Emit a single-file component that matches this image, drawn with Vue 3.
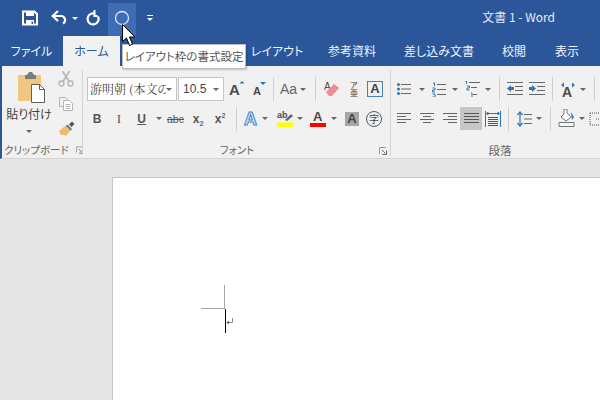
<template>
  <div class="word">
    <header class="titlebar">
      <div class="qat">
        <svg class="q-save" width="16" height="16" viewBox="0 0 16 16"><path d="M1 1.5h11.5l2.5 2.5v10.5H1z" fill="none" stroke="#fff" stroke-width="2"/><path d="M4 1h8v5H4zM4 10h8v5H4z" fill="#fff"/><path d="M9.5 11.5h1.5v2.5H9.500z" fill="#2b579a"/></svg>
        <svg class="q-undo" width="16" height="16" viewBox="0 0 16 16"><path d="M2.500 6h7.500a4 4 0 0 1 2 7.500" fill="none" stroke="#fff" stroke-width="2.200"/><path d="M7 1L1.500 6 7 11" fill="none" stroke="#fff" stroke-width="2.200"/></svg>
        <i class="dd dd-white q-dd"></i>
        <svg class="q-redo" width="16" height="16" viewBox="0 0 16 16"><path d="M10 3.500a5.500 5.500 0 1 0 4 3" fill="none" stroke="#fff" stroke-width="2.200"/><path d="M9.500 0v7h4V5h-2V0z" fill="#fff"/></svg>
        <div class="q-shape">
          <svg width="16" height="16" viewBox="0 0 16 16"><circle cx="8" cy="8" r="6.500" fill="none" stroke="#dfe7f4" stroke-width="1.300"/></svg>
        </div>
        <svg class="q-more" width="8" height="8" viewBox="0 0 8 8"><path d="M1 1h6v1H1z" fill="#fff"/><path d="M1 4h6L4 7z" fill="#fff"/></svg>
      </div>
      <div class="doc-title">文書 1 - Word</div>
    </header>

    <nav class="tabs">
      <div v-for="tab in tabs" :key="tab" class="tab" :class="{ active: tab === 'ホーム' }">{{ tab }}</div>
    </nav>

    <section class="ribbon">
      <div class="group g-clip">
        <div class="clip-body">
          <div class="paste">
            <svg width="28" height="32" viewBox="0 0 28 32">
              <path d="M1 4h23v26H1z" fill="#f0c780"/>
              <path d="M8 4h2l2-3h3l2 3h2v4H8z" fill="#7b7b7b"/>
              <path d="M14.500 13.500h8l5 5v13h-13z" fill="#fff" stroke="#5f5f5f"/>
              <path d="M22.500 13.500v5h5" fill="none" stroke="#5f5f5f"/>
            </svg>
            <span class="paste-label">貼り付け</span>
            <i class="dd paste-dd"></i>
          </div>
          <div class="clip-tools">
            <svg width="16" height="16" viewBox="0 0 16 16"><circle cx="3.500" cy="12.500" r="2.500" fill="none" stroke="#b4b4b4" stroke-width="1.300"/><circle cx="12.500" cy="12.500" r="2.500" fill="none" stroke="#b4b4b4" stroke-width="1.300"/><path d="M5 10.500L11.500 0M11 10.500L4.500 0" stroke="#b4b4b4" stroke-width="1.500" fill="none"/></svg>
            <svg width="16" height="16" viewBox="0 0 16 16"><path d="M1.500 1.500h6l2 2v2M5 10.500H1.500v-9" fill="#f2f2f2" stroke="#b4b4b4"/><path d="M5.500 4.500h6l3 3v7h-9z" fill="#fff" stroke="#b4b4b4"/><path d="M7.500 8.500h5M7.500 10.500h5M7.500 12.500h5" stroke="#b4b4b4"/></svg>
            <svg width="17" height="16" viewBox="0 0 17 16"><path d="M1 10l6-5 5 5-4 5C6 13 3 14 2 14c1-1 0-2-1-4z" fill="#eebc69"/><path d="M7.500 5l5 5 1.500-2-4.500-4.500z" fill="#7f7f7f"/><path d="M11 3.500L14 .5l2.500 2.500-3 3z" fill="#555"/></svg>
          </div>
        </div>
        <div class="group-label">
          <span>クリップボード</span>
          <svg class="launcher" width="8" height="8" viewBox="0 0 8 8"><path d="M.5 7V.5H7" fill="none" stroke="#9a9a9a"/><path d="M3 3l3.500 3.500M7.500 3.500v4h-4" fill="none" stroke="#666"/></svg>
        </div>
      </div>

      <div class="group g-font">
        <div class="font-r1 row">
          <div class="combo"><span class="combo-text">游明朝 (本文のフ</span><i class="dd"></i></div>
          <span></span>
          <div class="combo combo-size"><span class="combo-text">10.5</span><i class="dd"></i></div>
          <svg width="18" height="18" viewBox="0 0 18 18"><text x="0" y="15" class="a-glyph" font-size="15">A</text><path d="M10.500 3.500L13 1l2.500 2.500z" fill="#2e75b6"/></svg>
          <svg width="14" height="16" viewBox="0 0 14 16"><text x="0" y="14" class="a-glyph" font-size="11">A</text><path d="M7 1h6l-3 3z" fill="#2e75b6"/></svg>
          <i class="sep"></i>
          <span class="aa">Aa</span>
          <i class="dd"></i>
          <i class="sep"></i>
          <svg width="16" height="16" viewBox="0 0 16 16"><text x="0" y="9" class="a-glyph thin" font-size="10">A</text><path d="M2 11l8-8 5 4-7 8H5z" fill="#ec8c94"/></svg>
          <span class="ruby"><b>ア</b><b>亜</b></span>
          <span class="a-box">A</span>
        </div>
        <div class="font-r2 row">
          <b class="fmt">B</b>
          <em class="fmt ital">I</em>
          <span class="fmt under">U</span>
          <i class="dd"></i>
          <span class="fmt abc">abc</span>
          <span class="fmt">x<sub class="blue">2</sub></span>
          <span class="fmt">x<sup class="blue">2</sup></span>
          <i class="sep"></i>
          <span class="a-effect">A</span>
          <i class="dd"></i>
          <span></span>
          <svg width="16" height="17" viewBox="0 0 16 17"><text x="0" y="8" class="a-glyph" font-size="9">ab</text><path d="M8 10l6-6 2 2-6 5z" fill="#666"/><path d="M0 12.500h16V17H0z" fill="#ffff00"/></svg>
          <i class="dd"></i>
          <span></span>
          <svg width="16" height="17" viewBox="0 0 16 17"><text x="3" y="11" class="a-glyph" font-size="13">A</text><path d="M0 13h16v4H0z" fill="#f00"/></svg>
          <i class="dd"></i>
          <span class="a-shade">A</span>
          <span class="char-circle">字</span>
        </div>
        <div class="group-label center">
          <span>フォント</span>
          <svg class="launcher end" width="8" height="8" viewBox="0 0 8 8"><path d="M.5 7V.5H7" fill="none" stroke="#9a9a9a"/><path d="M3 3l3.500 3.500M7.500 3.500v4h-4" fill="none" stroke="#666"/></svg>
        </div>
      </div>

      <div class="group g-para">
        <div class="para-r1 row">
          <svg width="14" height="14" viewBox="0 0 14 14"><path d="M4 2.500h10M4 7h10M4 11.500h10" stroke="#666" stroke-width="1.200"/><circle cx="1.500" cy="2.500" r="1.500" fill="#2e75b6"/><circle cx="1.500" cy="7" r="1.500" fill="#2e75b6"/><circle cx="1.500" cy="11.500" r="1.500" fill="#2e75b6"/></svg>
          <i class="dd"></i>
          <svg width="14" height="15" viewBox="0 0 14 15"><path d="M5 2.500h9M5 7.500h9M5 12.500h9" stroke="#666" stroke-width="1.200"/><path d="M1 1h1.500v3M.5 6h2.500v2H.5v2H3M.5 12H3v3H.500" fill="none" stroke="#2e75b6"/></svg>
          <i class="dd"></i>
          <svg width="16" height="16" viewBox="0 0 16 16"><path d="M5 1.500h11M7 6.500h6M9 13.500h4" stroke="#666" stroke-width="1.200"/><path d="M1 0h1.500v3M3 5h2.500v2H3v2h2.500M7 12h1v4" fill="none" stroke="#2e75b6"/></svg>
          <i class="dd"></i>
          <i class="sep"></i>
          <svg width="16" height="14" viewBox="0 0 16 14"><path d="M0 .5h16M8 4.500h8M8 8.500h8M0 12.500h16" stroke="#666"/><path d="M0 6.500L4 3v2h3v3H4v2z" fill="#2e75b6"/></svg>
          <svg width="16" height="14" viewBox="0 0 16 14"><path d="M0 .5h16M8 4.500h8M8 8.500h8M0 12.500h16" stroke="#666"/><path d="M7 6.500L3 3v2H0v3h3v2z" fill="#2e75b6"/></svg>
          <i class="sep"></i>
          <svg width="16" height="15" viewBox="0 0 16 15"><text x="2" y="15" class="a-glyph" font-size="14">A</text><path d="M1 3l3-2.500v5zM15 3l-3-2.500v5z" fill="#2e75b6"/></svg>
          <i class="dd"></i>
          <i class="sep"></i>
        </div>
        <div class="para-r2 row">
          <svg width="15" height="11" viewBox="0 0 15 11"><path d="M0 .5h14M0 3.500h9M0 6.500h14M0 9.500h9" stroke="#666"/></svg>
          <svg width="14" height="11" viewBox="0 0 14 11"><path d="M0 .5h14M3 3.500h8M0 6.500h14M3 9.500h8" stroke="#666"/></svg>
          <svg width="14" height="11" viewBox="0 0 14 11"><path d="M0 .5h14M5 3.500h9M0 6.500h14M5 9.500h9" stroke="#666"/></svg>
          <span class="just-on"><svg width="15" height="11" viewBox="0 0 15 11"><path d="M0 .5h15M0 3.500h15M0 6.500h15M0 9.500h15" stroke="#555"/></svg></span>
          <svg width="16" height="16" viewBox="0 0 16 16"><path d="M.5 0v16M15.500 0v16" stroke="#2e75b6"/><path d="M3 2.500h10M3 1l-1.500 1.500L3 4zM13 1l1.500 1.500L13 4z" stroke="#2e75b6" fill="#2e75b6"/><path d="M3 6.500h10M3 8.500h10M3 10.500h10M3 12.500h10M3 14.500h10" stroke="#555"/></svg>
          <i class="sep"></i>
          <svg width="15" height="16" viewBox="0 0 15 16"><path d="M3 2v12" stroke="#2e75b6" stroke-width="1.200"/><path d="M.5 4L3 1l2.500 3M.5 12L3 15l2.500-3" fill="none" stroke="#2e75b6" stroke-width="1.200"/><path d="M7 3.500h8M7 8h8M7 12.500h8" stroke="#666"/></svg>
          <i class="dd"></i>
          <i class="sep"></i>
          <svg width="17" height="19" viewBox="0 0 17 19"><path d="M1 13.500h15v4H1z" fill="#f6f6f6" stroke="#777"/><path d="M6 0h3v4l4 4-5 4-5-4 3-3z" fill="#fff" stroke="#777"/><path d="M13 3l3 5-2 3z" fill="#2e75b6"/></svg>
          <i class="dd"></i>
          <svg width="20" height="14" viewBox="0 0 20 14"><path d="M1 1h18M1 13h18M1 1v12M7 7h12" stroke="#555" stroke-dasharray="1 1"/></svg>
        </div>
        <div class="group-label center para-label"><span>段落</span></div>
      </div>
    </section>

    <main class="canvas">
      <div class="page">
        <i class="crop-h"></i>
        <i class="crop-v"></i>
        <i class="caret"></i>
        <svg class="return" width="7" height="7" viewBox="0 0 7 7"><path d="M6.500 0v4.500H1" fill="none" stroke="#888"/><path d="M3 2.500L.5 4.500 3 6.500z" fill="#666"/></svg>
      </div>
    </main>

    <div class="tooltip">レイアウト枠の書式設定</div>
    <svg class="pointer" width="14" height="23" viewBox="0 0 14 23"><path d="M.5.500v17l4-3.500 3 7.500 3-1.300-3-7.200h5.500z" fill="#fff" stroke="#000"/></svg>
  </div>
</template>

<script setup>
const tabs = ['ファイル', 'ホーム', '挿入', 'デザイン', 'レイアウト', '参考資料', '差し込み文書', '校閲', '表示']
</script>

<style>
html,
body {
  margin: 0;
  overflow: hidden;
}
</style>

<style scoped>
.word {
  position: relative;
  width: 600px;
  height: 400px;
  overflow: hidden;
  display: flex;
  flex-direction: column;
  background: #e6e6e6;
  font-family: "Noto Sans CJK JP", "Liberation Sans", sans-serif;
  font-feature-settings: "palt";
}

.titlebar {
  flex: 0 0 36px;
  display: flex;
  background: #2b579a;
  color: #fff;
}

.qat {
  display: flex;
  align-items: center;
  height: 36px;
}

.q-save {
  margin-left: 22px;
}

.q-undo {
  margin-left: 13px;
}

.q-dd {
  margin-left: 5px;
}

.q-redo {
  margin-left: 6px;
}

.q-shape {
  width: 28px;
  height: 33px;
  margin: 3px 0 0 8px;
  display: flex;
  align-items: center;
  justify-content: center;
  background: #3e6db5;
}

.q-shape svg {
  margin-top: -3px;
}

.q-more {
  margin-left: 10px;
}

.doc-title {
  margin-left: auto;
  padding: 8px 45px 0 0;
  font-size: 12px;
  line-height: 17px;
  color: #e4ebf6;
}

.tabs {
  flex: 0 0 30px;
  display: grid;
  grid-template-columns: 63px 57px 50px 70px 74px 76px 98px 52px 54px;
  background: #2b579a;
}

.tab {
  font-size: 12px;
  line-height: 29px;
  text-align: center;
  color: #f0f3f9;
  white-space: nowrap;
}

.tab.active {
  background: #f1f1f1;
  color: #2b579a;
}

.ribbon {
  flex: 0 0 93px;
  display: flex;
  box-sizing: border-box;
  background: #f1f1f1;
  border-left: 2px solid #2b579a;
  border-bottom: 1px solid #d4d4d4;
  overflow: hidden;
}

.group {
  position: relative;
  box-sizing: border-box;
  flex: none;
}

.g-clip {
  width: 81px;
}

.g-clip::after,
.g-font::after {
  content: "";
  position: absolute;
  top: 4px;
  right: 0;
  width: 1px;
  height: 85px;
  background: #d4d4d4;
}

.g-font {
  width: 308px;
  padding-top: 10px;
}

.g-para {
  flex: 1;
  padding-top: 10px;
}

.clip-body {
  display: flex;
  height: 79px;
  padding-top: 5px;
  box-sizing: border-box;
}

.paste {
  width: 54px;
  display: flex;
  flex-direction: column;
  align-items: center;
}

.paste svg {
  margin-left: 3px;
}

.paste-label {
  margin-top: 3px;
  font-size: 12px;
  line-height: 16px;
  color: #444;
}

.paste-dd {
  margin-top: 8px;
}

.clip-tools {
  display: flex;
  flex-direction: column;
  gap: 9px;
  padding-left: 2px;
}

.group-label {
  position: absolute;
  left: 0;
  right: 0;
  top: 76px;
  height: 16px;
  padding-left: 2px;
  display: flex;
  align-items: center;
  font-size: 10.500px;
  line-height: 16px;
  color: #666;
  white-space: nowrap;
}

.group-label.center {
  justify-content: center;
  padding-left: 0;
}

.launcher {
  margin-left: 7px;
}

.launcher.end {
  position: absolute;
  right: 4px;
  top: 5px;
}

.para-label {
  font-size: 11.500px;
  justify-content: flex-start;
  padding-left: 113px;
}

.row {
  display: grid;
  align-items: center;
  justify-items: center;
}

.row > * {
  min-width: 0;
}

.font-r1 {
  height: 26px;
  padding-left: 4px;
  grid-template-columns: 90px 1px 46px 28px 16px 11px 19px 10px 15px 18px 26px 16px;
}

.font-r2 {
  height: 29px;
  margin-top: 2px;
  padding-left: 3px;
  grid-template-columns: 22px 22px 23px 11px 23px 22px 22px 11px 17px 12px 3px 22px 8px 3px 22px 10px 26px 18px;
}

.para-r1 {
  height: 26px;
  padding-left: 5px;
  grid-template-columns: 16px 19px 16px 16px 18px 13px 11px 20px 24px 7px 23px 7px 16px;
}

.para-r2 {
  height: 29px;
  margin-top: 2px;
  padding-left: 5px;
  grid-template-columns: 17px 28px 17px 26px 18px 12px 20px 9px 15px 17px 14px 20px;
}

.dd {
  display: block;
  width: 0;
  height: 0;
  border: 3px solid transparent;
  border-top: 3px solid #666;
  border-bottom: 0;
}

.dd-white {
  border-top-color: #fff;
}

.sep {
  display: block;
  width: 1px;
  height: 24px;
  background: #d0d0d0;
}

.combo {
  box-sizing: border-box;
  width: 100%;
  height: 24px;
  display: flex;
  align-items: center;
  background: #fff;
  border: 1px solid #c6c6c6;
  padding: 0 4px 0 2px;
  overflow: hidden;
}

.combo-text {
  flex: 1;
  overflow: hidden;
  white-space: nowrap;
  font-size: 12px;
  line-height: 22px;
  color: #444;
  font-family: "Noto Serif CJK JP", "Noto Sans CJK JP", sans-serif;
}

.combo-size .combo-text {
  font-family: "Liberation Sans", sans-serif;
  padding-left: 2px;
}

.a-glyph {
  font-family: "Liberation Sans", sans-serif;
  font-weight: 700;
  fill: #4a4a4a;
}

.a-glyph.thin {
  font-weight: 400;
}

.aa {
  font: 14px "Liberation Sans", sans-serif;
  color: #666;
}

.ruby {
  display: flex;
  flex-direction: column;
  font-size: 8px;
  line-height: 8px;
  color: #444;
}

.ruby b {
  font-weight: 400;
}

.a-box {
  box-sizing: border-box;
  width: 16px;
  height: 16px;
  border: 1px solid #4a80b8;
  font: 700 13px/14px "Liberation Sans", sans-serif;
  text-align: center;
  color: #444;
}

.fmt {
  font: 700 12px/16px "Liberation Sans", sans-serif;
  color: #555;
}

.ital {
  font-family: "Liberation Serif", serif;
  font-size: 13px;
  font-weight: 400;
}

.under {
  text-decoration: underline;
}

.abc {
  font-size: 10.500px;
  font-weight: 400;
  text-decoration: line-through;
}

.fmt sub,
.fmt sup {
  font-size: 7px;
  line-height: 0;
}

.blue {
  color: #2e75b6;
}

.a-effect {
  font: 700 18px/20px "Liberation Sans", sans-serif;
  color: #dbe8f6;
  -webkit-text-stroke: 1px #4a86c5;
}

.a-shade {
  width: 14px;
  height: 14px;
  background: #a6a6a6;
  font: 700 13px/14px "Liberation Sans", sans-serif;
  text-align: center;
  color: #444;
}

.char-circle {
  box-sizing: border-box;
  width: 16px;
  height: 16px;
  border: 1px solid #555;
  border-radius: 50%;
  font-size: 10px;
  line-height: 14px;
  text-align: center;
  color: #444;
}

.just-on {
  width: 22px;
  height: 23px;
  display: flex;
  align-items: center;
  justify-content: center;
  background: #c6c6c6;
}

.canvas {
  flex: 1;
  padding: 18px 0 0 112px;
}

.page {
  position: relative;
  height: 300px;
  background: #fff;
  border: 1px solid #c6c6c6;
  border-width: 1px 0 0 1px;
}

.crop-h {
  position: absolute;
  left: 88px;
  top: 130px;
  width: 23px;
  height: 1px;
  background: #a6a6a6;
}

.crop-v {
  position: absolute;
  left: 111px;
  top: 107px;
  width: 1px;
  height: 24px;
  background: #a6a6a6;
}

.caret {
  position: absolute;
  left: 112px;
  top: 131px;
  width: 1px;
  height: 24px;
  background: #000;
}

.return {
  position: absolute;
  left: 113px;
  top: 140px;
}

.tooltip {
  position: absolute;
  left: 122px;
  top: 44px;
  box-sizing: border-box;
  width: 124px;
  height: 25px;
  background: #fff;
  border: 1px solid #bdbdbd;
  box-shadow: 1px 1px 2px rgba(0, 0, 0, 0.2);
  font-size: 11.500px;
  line-height: 23px;
  text-align: center;
  color: #555;
  white-space: nowrap;
}

.pointer {
  position: absolute;
  left: 122px;
  top: 24px;
}
</style>
